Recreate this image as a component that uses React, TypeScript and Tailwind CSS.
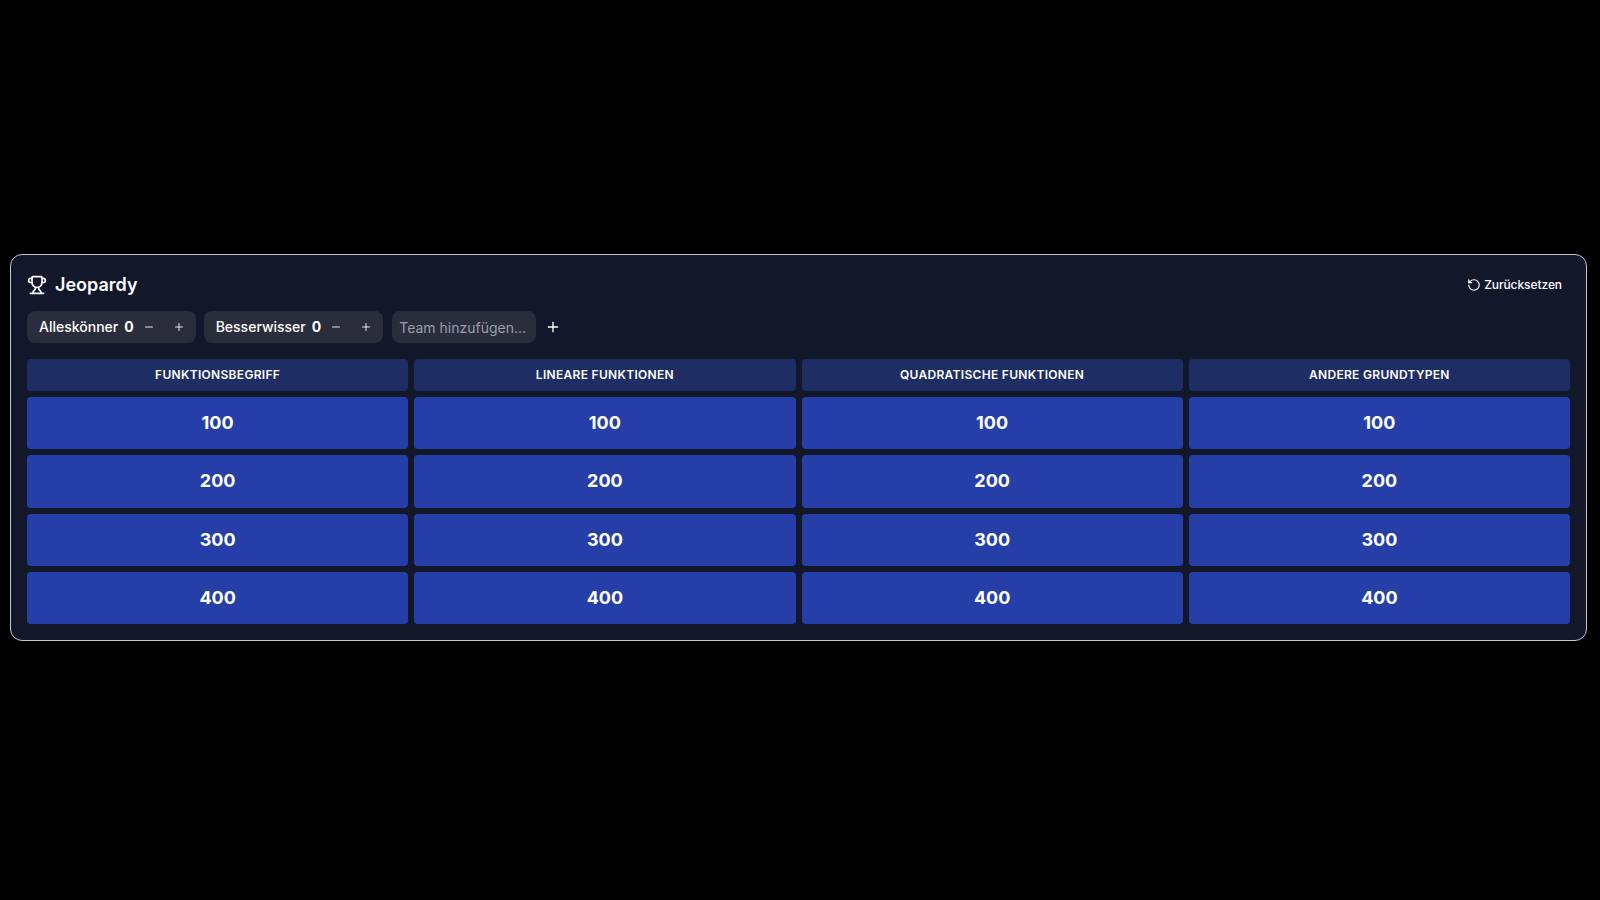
import { Minus, Plus, RotateCcw, Trophy } from "lucide-react";

const categories = ["Funktionsbegriff", "Lineare Funktionen", "Quadratische Funktionen", "Andere Grundtypen"];
const points = [100, 200, 300, 400];
const teams = [
  { name: "Alleskönner", score: 0 },
  { name: "Besserwisser", score: 0 },
];

const TeamChip = ({ name, score }: { name: string; score: number }) => (
  <div className="flex h-8 items-center rounded-lg bg-[#292d3c] pl-3 pr-[5px]">
    <span className="text-sm font-medium text-white">{name}</span>
    <span className="ml-1.5 text-sm font-bold text-white">{score}</span>
    <button className="ml-[3px] flex h-6 w-6 items-center justify-center text-gray-200">
      <Minus size={12} />
    </button>
    <button className="ml-1.5 flex h-6 w-6 items-center justify-center text-gray-200">
      <Plus size={12} />
    </button>
  </div>
);

export default function App() {
  return (
    <div className="min-h-screen bg-black pl-[10px] pr-[13px] pt-[254px] font-['Inter',sans-serif]">
      <div className="rounded-xl border border-[#c4c6cc] bg-[#12172a] p-4">
        <div className="flex h-7 items-center justify-between">
          <div className="flex items-center gap-2 text-white">
            <Trophy size={20} />
            <h1 className="text-lg font-semibold">Jeopardy</h1>
          </div>
          <button className="mr-2 flex items-center gap-[3px] text-xs font-medium tracking-[-0.08px] text-white">
            <RotateCcw size={14} />
            Zurücksetzen
          </button>
        </div>

        <div className="mt-3 flex items-center gap-2">
          {teams.map((team) => (
            <TeamChip key={team.name} name={team.name} score={team.score} />
          ))}
          <input
            placeholder="Team hinzufügen..."
            className="ml-px h-8 w-36 rounded-lg bg-[#292d3c] px-[7px] text-sm text-white outline-none placeholder:text-[#9a9eac]"
          />
          <button className="flex h-8 w-[18px] items-center justify-center text-white">
            <Plus size={16} />
          </button>
        </div>

        <div className="mt-4 grid grid-cols-4 gap-1.5">
          {categories.map((category) => (
            <div
              key={category}
              className="flex h-8 items-center justify-center rounded bg-[#1e2d63] text-xs font-semibold uppercase tracking-wide text-white"
            >
              {category}
            </div>
          ))}
          {points.map((value) =>
            categories.map((category) => (
              <button
                key={category + value}
                className="flex h-[52.25px] items-center justify-center rounded bg-[#263fa8] text-lg font-bold text-white"
              >
                {value}
              </button>
            )),
          )}
        </div>
      </div>
    </div>
  );
}
